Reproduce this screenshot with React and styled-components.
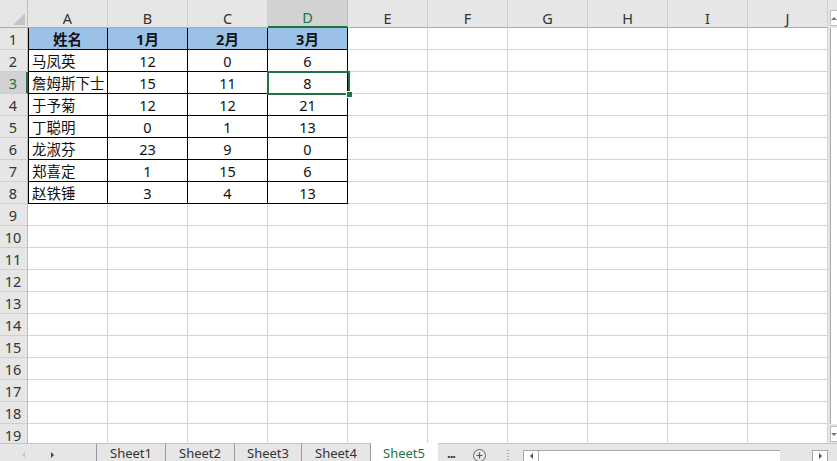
import React from "react";
import styled, { createGlobalStyle } from "styled-components";

const GREEN = "#217346";
const GRID = "#d4d4d4";
const HEAD_BG = "#e6e6e6";
const HEAD_SEL = "#d2d2d2";

const Global = createGlobalStyle`
  html, body { margin: 0; padding: 0; background: #fff; overflow: hidden; }
  body { font-family: "Noto Sans", "Noto Sans CJK SC", sans-serif; }
  #root { width: 837px; height: 461px; }
`;

const Window = styled.div`
  width: 837px;
  height: 461px;
  display: flex;
  flex-direction: column;
  overflow: hidden;
  background: #fff;
`;

const Main = styled.div`
  display: flex;
  height: 443px;
  overflow: hidden;
`;

const Sheet = styled.div`
  width: 828px;
  flex: none;
  overflow: hidden;
  display: grid;
  grid-template-columns: 28px repeat(10, 80px);
  grid-template-rows: 28px repeat(19, 22px);
  align-content: start;
`;

const Corner = styled.div`
  position: relative;
  background: ${HEAD_BG};
  border-right: 1px solid #bdbdbd;
  border-bottom: 1px solid #ababab;
`;

const CornerTriangle = styled.div`
  position: absolute;
  right: 2px;
  bottom: 2px;
  width: 0;
  height: 0;
  border-left: 12px solid transparent;
  border-bottom: 12px solid #c4c4c4;
`;

const ColHead = styled.div`
  background: ${(p) => (p.$sel ? HEAD_SEL : HEAD_BG)};
  color: ${(p) => (p.$sel ? GREEN : "#333")};
  border-right: 1px solid ${(p) => (p.$sel ? "#bdbdbd" : "#cfcfcf")};
  border-bottom: ${(p) => (p.$sel ? `2px solid ${GREEN}` : "1px solid #ababab")};
  display: flex;
  align-items: flex-end;
  justify-content: center;
  padding-bottom: 0;
  margin-bottom: ${(p) => (p.$sel ? "0" : "0")};
  box-sizing: border-box;
  font-size: 14.5px;
  line-height: 18px;
`;

const RowHead = styled.div`
  background: ${(p) => (p.$sel ? HEAD_SEL : HEAD_BG)};
  color: ${(p) => (p.$sel ? GREEN : "#333")};
  border-right: ${(p) => (p.$sel ? `2px solid ${GREEN}` : "1px solid #bdbdbd")};
  border-bottom: 1px solid #cfcfcf;
  display: flex;
  align-items: center;
  justify-content: center;
  font-size: 14.5px;
  padding-right: ${(p) => (p.$sel ? "0" : "1px")};
`;

const Cell = styled.div`
  position: relative;
  z-index: ${(p) => (p.$selected ? 2 : 0)};
  background: ${(p) => p.$bg || "#fff"};
  border-right: 1px solid ${(p) => (p.$table ? "#000" : GRID)};
  border-bottom: 1px solid ${(p) => (p.$table ? "#000" : GRID)};
  box-shadow: ${(p) => (p.$leftEdge ? "inset 1px 0 0 #000" : "none")};
  display: flex;
  align-items: center;
  justify-content: ${(p) => (p.$left ? "flex-start" : "center")};
  padding: ${(p) => (p.$left ? "0 0 0 4px" : "0")};
  font-family: "Noto Sans", "Noto Sans CJK SC", sans-serif;
  font-size: 14.5px;
  font-weight: ${(p) => (p.$bold ? 700 : 400)};
  color: #111;
  white-space: nowrap;
`;

const Selection = styled.div`
  position: absolute;
  top: -1px;
  left: -1px;
  right: -3px;
  bottom: -2px;
  border: 2px solid ${GREEN};
  pointer-events: none;
`;

const FillHandle = styled.div`
  position: absolute;
  right: -4px;
  bottom: -4px;
  width: 5px;
  height: 5px;
  background: ${GREEN};
  outline: 1px solid #fff;
`;

const VScroll = styled.div`
  flex: 1;
  background: ${HEAD_BG};
  display: flex;
  flex-direction: column;
  padding-top: 10px;
  padding-bottom: 1px;
  box-sizing: border-box;
`;

const VArrow = styled.div`
  height: 14px;
  margin-left: 2px;
  background: #fff;
  border: 1px solid #bdbdbd;
  border-right: none;
  display: flex;
  align-items: center;
  justify-content: center;
`;

const VTrack = styled.div`
  flex: 1;
  margin: 2px 0 2px 2px;
  background: #fff;
  border-left: 1px solid #a6a6a6;
`;

const TabBar = styled.div`
  height: 18px;
  display: flex;
  align-items: stretch;
  background: ${HEAD_BG};
  font-family: "Noto Sans", sans-serif;
  font-size: 13px;
`;

const Nav = styled.div`
  width: 96px;
  flex: none;
  display: flex;
  align-items: center;
  border-top: 1px solid #c6c6c6;
  box-sizing: border-box;
  padding-top: 5px;
`;

const NavArrow = styled.div`
  width: 0;
  height: 0;
  border-top: 3px solid transparent;
  border-bottom: 3px solid transparent;
  margin-left: ${(p) => p.$ml}px;
  ${(p) =>
    p.$dir === "left"
      ? `border-right: 3px solid #c8c8c8;`
      : `border-left: 3px solid #444;`}
`;

const Tab = styled.div`
  width: ${(p) => p.$w}px;
  flex: none;
  box-sizing: border-box;
  text-align: center;
  line-height: 18px;
  padding-top: 0;
  background: ${(p) => (p.$active ? "#fff" : "transparent")};
  color: ${(p) => (p.$active ? GREEN : "#333")};
  border-top: 1px solid ${(p) => (p.$active ? "#fff" : "#c6c6c6")};
  border-left: ${(p) => (p.$first ? "1px solid #9a9a9a" : "none")};
  border-right: 1px solid ${(p) => (p.$active ? "transparent" : "#9a9a9a")};
`;

const Rest = styled.div`
  flex: 1;
  display: flex;
  align-items: stretch;
  border-top: 1px solid #c6c6c6;
`;

const Dots = styled.div`
  width: 26px;
  margin-left: 9px;
  flex: none;
  font-size: 13px;
  font-weight: 700;
  line-height: 18px;
  color: #333;
  letter-spacing: -1px;
`;

const AddBtn = styled.div`
  width: 13px;
  height: 13px;
  margin-top: 5px;
  border: 1px solid #666;
  border-radius: 50%;
  box-sizing: border-box;
  display: flex;
  align-items: center;
  justify-content: center;
  flex: none;
`;

const Grip = styled.div`
  width: 2px;
  margin: 6px 14px 0 21px;
  flex: none;
  background: repeating-linear-gradient(to bottom, #b0b0b0 0 1px, transparent 1px 3px);
`;

const HScroll = styled.div`
  flex: none;
  width: 305px;
  display: flex;
  margin-top: 6px;
`;

const HBtn = styled.div`
  width: 14px;
  flex: none;
  background: #fff;
  border: 1px solid #a6a6a6;
  border-bottom: none;
  display: flex;
  align-items: center;
  justify-content: center;
`;

const HThumb = styled.div`
  width: 241px;
  flex: none;
  background: #fff;
  border-top: 1px solid #a6a6a6;
`;

const HTrack = styled.div`
  flex: 1;
  background: ${HEAD_BG};
`;

const Tri = styled.div`
  width: 0;
  height: 0;
  ${(p) =>
    p.$dir === "left"
      ? `border-top: 3px solid transparent; border-bottom: 3px solid transparent; border-right: 3px solid #555;`
      : p.$dir === "right"
      ? `border-top: 3px solid transparent; border-bottom: 3px solid transparent; border-left: 3px solid #555;`
      : p.$dir === "up"
      ? `border-left: 3px solid transparent; border-right: 3px solid transparent; border-bottom: 3px solid #777;`
      : `border-left: 3px solid transparent; border-right: 3px solid transparent; border-top: 3px solid #777;`}
`;

const COLS = ["A", "B", "C", "D", "E", "F", "G", "H", "I", "J"];
const DATA = [
  ["姓名", "1月", "2月", "3月"],
  ["马凤英", 12, 0, 6],
  ["詹姆斯下士", 15, 11, 8],
  ["于予菊", 12, 12, 21],
  ["丁聪明", 0, 1, 13],
  ["龙淑芬", 23, 9, 0],
  ["郑喜定", 1, 15, 6],
  ["赵铁锤", 3, 4, 13],
];
const TABS = [
  { name: "Sheet1", w: 70 },
  { name: "Sheet2", w: 69 },
  { name: "Sheet3", w: 67 },
  { name: "Sheet4", w: 69 },
  { name: "Sheet5", w: 67, active: true },
];

export default function App() {
  const rows = [];
  for (let r = 1; r <= 19; r++) {
    rows.push(
      <RowHead key={`rh${r}`} $sel={r === 3}>
        {r}
      </RowHead>
    );
    COLS.forEach((c, ci) => {
      const inTable = r <= 8 && ci <= 3;
      const val = inTable ? DATA[r - 1][ci] : "";
      const selected = r === 3 && ci === 3;
      rows.push(
        <Cell
          key={`${c}${r}`}
          $table={inTable}
          $leftEdge={inTable && ci === 0}
          $bg={r === 1 && inTable ? "#9bc2e6" : undefined}
          $bold={r === 1 && inTable}
          $left={inTable && ci === 0 && r > 1}
          $selected={selected}
        >
          {val}
          {selected && (
            <Selection>
              <FillHandle />
            </Selection>
          )}
        </Cell>
      );
    });
  }

  return (
    <Window>
      <Global />
      <Main>
        <Sheet>
          <Corner>
            <CornerTriangle />
          </Corner>
          {COLS.map((c) => (
            <ColHead key={c} $sel={c === "D"}>
              {c}
            </ColHead>
          ))}
          {rows}
        </Sheet>
        <VScroll>
          <VArrow>
            <Tri $dir="up" />
          </VArrow>
          <VTrack />
          <VArrow>
            <Tri $dir="down" />
          </VArrow>
        </VScroll>
      </Main>
      <TabBar>
        <Nav>
          <NavArrow $dir="left" $ml={22} />
          <NavArrow $dir="right" $ml={26} />
        </Nav>
        {TABS.map((t, i) => (
          <Tab key={t.name} $w={t.w} $active={t.active} $first={i === 0}>
            {t.name}
          </Tab>
        ))}
        <Rest>
          <Dots>...</Dots>
          <AddBtn>
            <svg width="7" height="7" viewBox="0 0 7 7">
              <path d="M3.5 0.5v6M0.5 3.5h6" stroke="#555" strokeWidth="1.2" />
            </svg>
          </AddBtn>
          <Grip />
          <HScroll>
            <HBtn>
              <Tri $dir="left" />
            </HBtn>
            <HThumb />
            <HTrack />
            <HBtn>
              <Tri $dir="right" />
            </HBtn>
          </HScroll>
        </Rest>
      </TabBar>
    </Window>
  );
}
